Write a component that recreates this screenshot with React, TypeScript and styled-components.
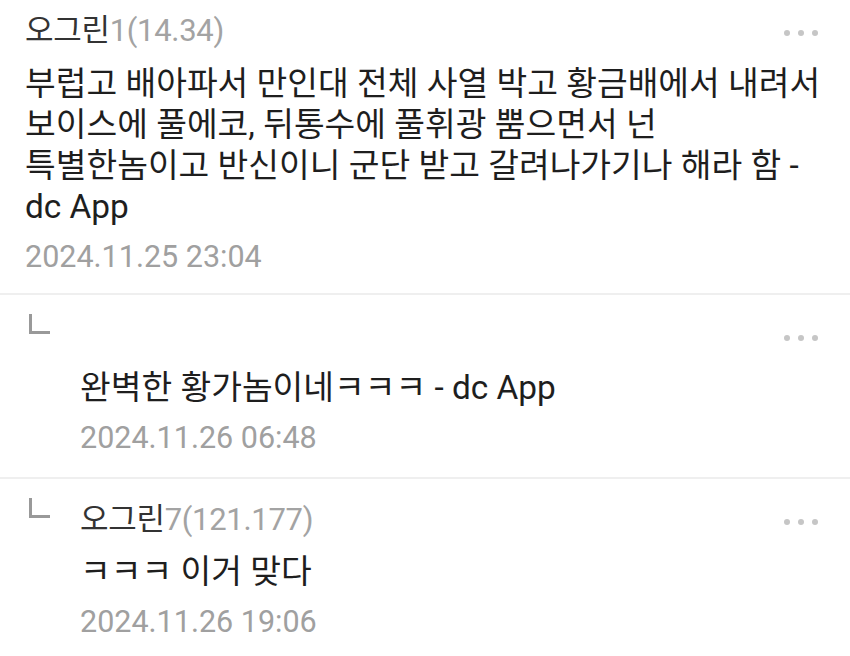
import React from 'react';
import styled, { createGlobalStyle } from 'styled-components';

const GlobalStyle = createGlobalStyle`
  html, body {
    margin: 0;
    padding: 0;
    background: #fff;
  }
  body {
    font-family: Roboto, "Noto Sans CJK KR", sans-serif;
    -webkit-font-smoothing: antialiased;
  }
`;

const List = styled.div`
  display: flex;
  flex-direction: column;
  width: 850px;
`;

const Item = styled.div<{ $reply?: boolean }>`
  display: grid;
  grid-template-columns: ${props => props.$reply ? '55px 1fr' : '1fr'};
  padding: ${props => props.$reply ? '17px 25px 19px 25px' : '7px 25px 16px 25px'};
  border-bottom: 2px solid #efefef;
`;

const ReplyMark = styled.span`
  display: block;
  width: 18px;
  height: 17px;
  margin: 2px 0 0 4px;
  border-left: 3px solid #999;
  border-bottom: 3px solid #999;
`;

const Body = styled.div`
  display: flex;
  flex-direction: column;
`;

const Header = styled.div`
  display: flex;
  align-items: center;
  justify-content: space-between;
  height: 40px;
`;

const Nick = styled.span`
  font-size: 31px;
  color: #333;
  letter-spacing: -0.3px;
`;

const Ip = styled.span`
  color: #a3a3a3;
`;

const Dots = styled.div`
  display: flex;
  gap: 8px;
  margin-top: 12px;
  margin-right: 7px;

  & span {
    width: 6px;
    height: 6px;
    border-radius: 50%;
    background: #c6c6c6;
  }
`;

const Text = styled.p<{ $gap: number }>`
  margin: ${props => props.$gap}px 0 0 0;
  font-size: 33.4px;
  line-height: 41px;
  color: #1e1e1e;
  white-space: pre-line;
  word-break: keep-all;
`;

const Date = styled.div`
  margin-top: 10px;
  font-size: 30.5px;
  line-height: 40px;
  color: #a0a0a0;
`;

type Comment = {
  nick: string;
  ip: string;
  text: string;
  date: string;
  reply?: boolean;
};

const comments: Comment[] = [
  {
    nick: '오그린',
    ip: '1(14.34)',
    text: '부럽고 배아파서 만인대 전체 사열 박고 황금배에서 내려서 보이스에 풀에코, 뒤통수에 풀휘광 뿜으면서 넌\n특별한놈이고 반신이니 군단 받고 갈려나가기나 해라 함 - dc App',
    date: '2024.11.25 23:04',
  },
  {
    nick: '',
    ip: '',
    text: '완벽한 황가놈이네ㅋㅋㅋ - dc App',
    date: '2024.11.26 06:48',
    reply: true,
  },
  {
    nick: '오그린',
    ip: '7(121.177)',
    text: 'ㅋㅋㅋ 이거 맞다',
    date: '2024.11.26 19:06',
    reply: true,
  },
];

export default function App() {
  return (
    <>
      <GlobalStyle />
      <List>
        {comments.map((c, i) => (
          <Item key={i} $reply={c.reply}>
            {c.reply && <div><ReplyMark /></div>}
            <Body>
              <Header>
                <Nick>
                  {c.nick}
                  <Ip>{c.ip}</Ip>
                </Nick>
                <Dots>
                  <span />
                  <span />
                  <span />
                </Dots>
              </Header>
              <Text $gap={c.reply ? 15 : 16}>{c.text}</Text>
              <Date>{c.date}</Date>
            </Body>
          </Item>
        ))}
      </List>
    </>
  );
}
